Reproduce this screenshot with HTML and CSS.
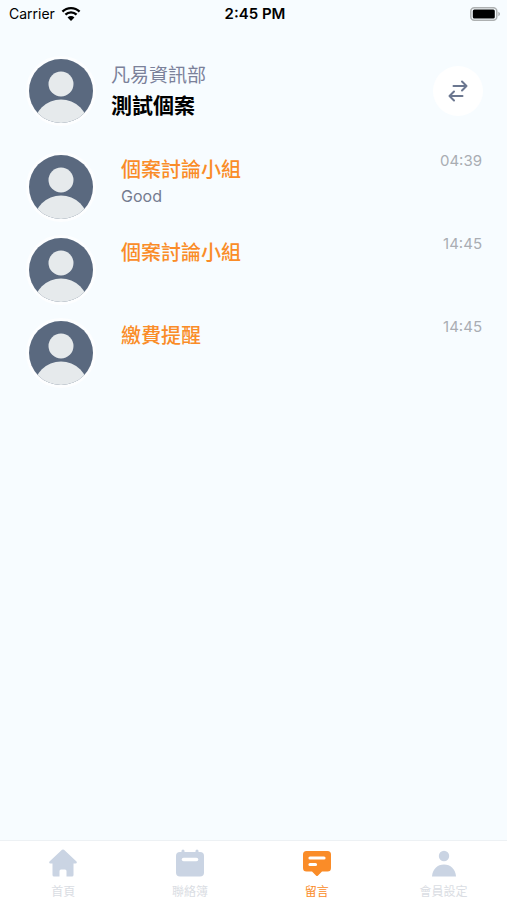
FILE: index.html
```
<!DOCTYPE html>
<html lang="zh-Hant">
  <head>
    <meta charset="UTF-8">
    <meta name="viewport" content="width=device-width, initial-scale=1.0">
    <title>留言</title>
    <link rel="stylesheet" href="styles.css">
  </head>
  <body>
    <svg class="symbols" aria-hidden="true">
      <symbol id="avatar" viewBox="0 0 64 64">
        <rect width="64" height="64" fill="#5a697f"/>
        <circle cx="32" cy="25" r="12.5" fill="#e6eaec"/>
        <ellipse cx="32" cy="67" rx="27" ry="26.500" fill="#e6eaec"/>
      </symbol>
    </svg>

    <div class="status-bar">
      <div class="carrier">
        <span>Carrier</span>
        <svg width="20" height="15" viewBox="0 0 18 14">
          <path d="M1 5.200A11.500 11.500 0 0 1 17 5.200M3.800 8.100A7.500 7.500 0 0 1 14.200 8.100" fill="none" stroke="#000" stroke-width="2.200"/>
          <path d="M9 14L5.800 10.700A4.600 4.600 0 0 1 12.200 10.700Z"/>
        </svg>
      </div>
      <div class="clock">2:45 PM</div>
      <div class="battery">
        <svg width="31" height="14" viewBox="0 0 31 14">
          <rect x="0.800" y="0.800" width="26" height="12.400" rx="3.500" fill="#f7fcff" stroke="#adb0b1" stroke-width="1.500"/>
          <rect x="2.800" y="2.500" width="22" height="9" rx="1.500"/>
          <path d="M28.300 4.800C30.600 5.600 30.600 8.400 28.300 9.200Z" fill="#adb0b1"/>
        </svg>
      </div>
    </div>

    <header class="profile">
      <svg class="avatar"><use href="#avatar"/></svg>
      <div class="profile-text">
        <p class="org">凡易資訊部</p>
        <h1>測試個案</h1>
      </div>
      <button class="switch" type="button" aria-label="切換個案">
        <svg width="20" height="22" viewBox="0 0 20 22" fill="none" stroke="#6b7790" stroke-width="2" stroke-linecap="round" stroke-linejoin="round">
          <path d="M5.500 6H18.500M14 1.500L18.500 6L14 10.500M14.500 16H1.500M6 11.500L1.500 16L6 20.500"/>
        </svg>
      </button>
    </header>

    <main>
      <ul class="messages">
        <li class="message">
          <svg class="avatar"><use href="#avatar"/></svg>
          <div class="message-text">
            <h2>個案討論小組</h2>
            <p>Good</p>
          </div>
          <time>04:39</time>
        </li>
        <li class="message">
          <svg class="avatar"><use href="#avatar"/></svg>
          <div class="message-text">
            <h2>個案討論小組</h2>
          </div>
          <time>14:45</time>
        </li>
        <li class="message">
          <svg class="avatar"><use href="#avatar"/></svg>
          <div class="message-text">
            <h2>繳費提醒</h2>
          </div>
          <time>14:45</time>
        </li>
      </ul>
    </main>

    <nav class="tab-bar">
      <a href="#home">
        <svg width="28" height="28" viewBox="0 0 28 28">
          <path d="M13 .8Q14 0 15 .8L27.500 12.500Q28.500 14.500 26.500 14.500H24.500V26Q24.500 27.500 23 27.500H17.500V22Q17.500 20.500 16 20.500H12Q10.500 20.500 10.500 22V27.500H5Q3.500 27.500 3.500 26V14.500H1.500Q-.5 14.500 .5 12.500Z" fill="currentColor"/>
        </svg>
        <span>首頁</span>
      </a>
      <a href="#contact">
        <svg width="28" height="28" viewBox="0 0 28 28">
          <path d="M7 2V5M21 2V5" stroke="currentColor" stroke-width="3" stroke-linecap="round"/>
          <rect y="3" width="28" height="24.500" rx="4" fill="currentColor"/>
          <path d="M7.500 10.500H20.500" stroke="#fff" stroke-width="3.500" stroke-linecap="round"/>
        </svg>
        <span>聯絡簿</span>
      </a>
      <a class="active" href="#messages">
        <svg width="28" height="28" viewBox="0 0 28 28">
          <path d="M3.500 2H24.500Q28 2 28 5.500V19Q28 22.500 24.500 22.500H19L14.800 26.700Q14 27.500 13.200 26.700L9 22.500H3.500Q0 22.500 0 19V5.500Q0 2 3.500 2Z" fill="currentColor"/>
          <path d="M7 9H21M7 15.500H12.500" stroke="#fff" stroke-width="3.200" stroke-linecap="round"/>
        </svg>
        <span>留言</span>
      </a>
      <a href="#settings">
        <svg width="28" height="28" viewBox="0 0 28 28">
          <circle cx="14" cy="7" r="5.200" fill="currentColor"/>
          <path d="M2 27.500C2.500 20 7.500 15.500 14 15.500S25.500 20 26 27.500Z" fill="currentColor"/>
        </svg>
        <span>會員設定</span>
      </a>
    </nav>
  </body>
</html>
```
FILE: styles.css
```
* {
  box-sizing: border-box;
}
body {
  display: flex;
  flex-direction: column;
  min-height: 100vh;
  margin: 0;
  background: #f7fcff;
  color: #000;
  font-family: Inter, "Noto Sans CJK TC", sans-serif;
}
h1, h2, p, ul {
  margin: 0;
  padding: 0;
}
svg {
  display: block;
}
.symbols {
  display: none;
}
.status-bar {
  display: grid;
  grid-template-columns: 1fr auto 1fr;
  align-items: center;
  height: 27px;
  padding: 0 6px 0 9px;
  font-size: 14px;
}
.carrier {
  display: flex;
  align-items: center;
  gap: 6px;
}
.clock {
  font-size: 15px;
  font-weight: 600;
}
.battery {
  justify-self: end;
}
.profile {
  display: flex;
  align-items: center;
  padding: 29px 24px 26px 26px;
}
.avatar {
  flex-shrink: 0;
  width: 70px;
  height: 70px;
  border: 3px solid #fdfeff;
  border-radius: 50%;
}
.profile-text {
  flex: 1;
  margin-left: 15px;
}
.org {
  color: #7b819a;
  font-size: 19px;
  line-height: 30px;
}
.profile h1 {
  font-size: 21px;
  font-weight: 600;
  line-height: 30px;
}
.switch {
  display: flex;
  align-items: center;
  justify-content: center;
  width: 50px;
  height: 50px;
  border: 0;
  border-radius: 50%;
  background: #fff;
  cursor: pointer;
}
main {
  flex: 1;
}
.messages {
  display: flex;
  flex-direction: column;
  gap: 13px;
  padding: 0 25px 0 26px;
  list-style: none;
}
.message {
  display: flex;
  align-items: flex-start;
}
.message-text {
  flex: 1;
  margin-left: 25px;
  padding-top: 3px;
}
.message h2 {
  color: #fa8c28;
  font-size: 20px;
  font-weight: 500;
  line-height: 30px;
}
.message p {
  color: #747b8f;
  font-size: 16px;
  line-height: 22px;
}
.message time {
  color: #a9adb3;
  font-size: 15px;
  line-height: 18px;
}
.tab-bar {
  display: grid;
  grid-template-columns: repeat(4, 1fr);
  height: 60px;
  border-top: 1px solid #edf1f4;
  background: #fff;
}
.tab-bar a {
  display: flex;
  flex-direction: column;
  align-items: center;
  gap: 7px;
  padding-top: 8px;
  color: #cad4e3;
  font-size: 12px;
  line-height: 16px;
  text-decoration: none;
}
.tab-bar svg {
  flex-shrink: 0;
}
.tab-bar span {
  color: #dadde3;
}
.tab-bar .active,
.tab-bar .active span {
  color: #fa8c28;
}
```
